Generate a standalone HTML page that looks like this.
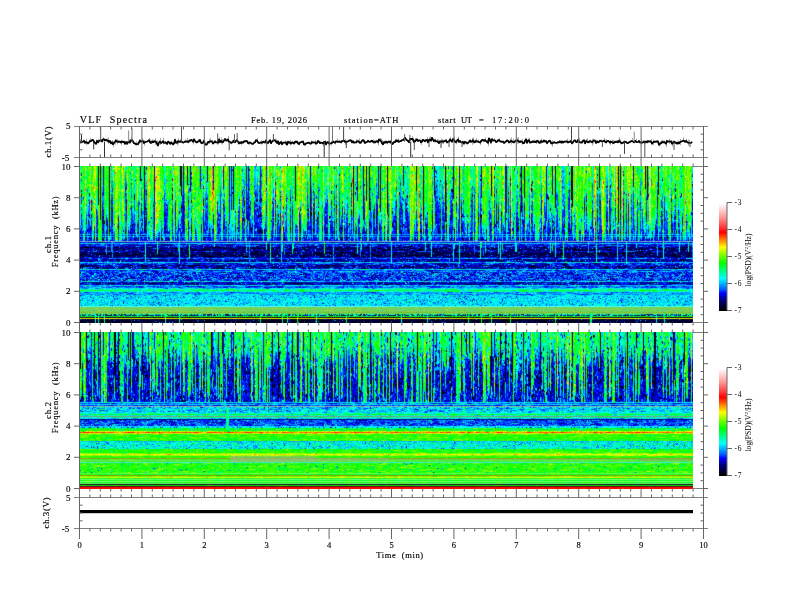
<!DOCTYPE html>
<html><head><meta charset="utf-8">
<style>
html,body{margin:0;padding:0;background:#fff;width:792px;height:612px;overflow:hidden}
#c{position:absolute;left:0;top:0}
svg{position:absolute;left:0;top:0}
text{font-family:"Liberation Serif",serif;fill:#000;stroke:#000;stroke-width:0.15px}
.sp{position:absolute;left:80px;width:613px}
#sp1{top:166px;height:157px;background:linear-gradient(to bottom,#3edc3b 0px,#3edc3b 1px,#3cde3d 1px,#3cde3d 2px,#40dd3d 2px,#40dd3d 3px,#40df3a 3px,#40df3a 4px,#40de3a 4px,#40de3a 5px,#3fde3c 5px,#3fde3c 6px,#3fdf3d 6px,#3fdf3d 7px,#3dde3e 7px,#3dde3e 8px,#3dde3d 8px,#3dde3d 9px,#3cde3d 9px,#3cde3d 10px,#3bde40 10px,#3bde40 11px,#39de43 11px,#39de43 12px,#37dd47 12px,#37dd47 13px,#39db46 13px,#39db46 14px,#3ad845 14px,#3ad845 15px,#38d949 15px,#38d949 16px,#35d94d 16px,#35d94d 17px,#33d74b 17px,#33d74b 18px,#33d64c 18px,#33d64c 19px,#33d74b 19px,#33d74b 20px,#32d74c 20px,#32d74c 21px,#32d54f 21px,#32d54f 22px,#30d453 22px,#30d453 23px,#30d450 23px,#30d450 24px,#30d452 24px,#30d452 25px,#2dd455 25px,#2dd455 26px,#2ed258 26px,#2ed258 27px,#2cce5b 27px,#2cce5b 28px,#2acb5e 28px,#2acb5e 29px,#2bca5f 29px,#2bca5f 30px,#2bc961 30px,#2bc961 31px,#2ac961 31px,#2ac961 32px,#29c964 32px,#29c964 33px,#29c963 33px,#29c963 34px,#2ac762 34px,#2ac762 35px,#2ac665 35px,#2ac665 36px,#28c468 36px,#28c468 37px,#26c16c 37px,#26c16c 38px,#26c16c 38px,#26c16c 39px,#26be6c 39px,#26be6c 40px,#25bd70 40px,#25bd70 41px,#25bc6f 41px,#25bc6f 42px,#23ba70 42px,#23ba70 43px,#22b872 43px,#22b872 44px,#22b775 44px,#22b775 45px,#21b577 45px,#21b577 46px,#1fb379 46px,#1fb379 47px,#1eb17d 47px,#1eb17d 48px,#1dae80 48px,#1dae80 49px,#1caa82 49px,#1caa82 50px,#1ba985 50px,#1ba985 51px,#17a98b 51px,#17a98b 52px,#17a78f 52px,#17a78f 53px,#16a493 53px,#16a493 54px,#14a596 54px,#14a596 55px,#14a197 55px,#14a197 56px,#149e9a 56px,#149e9a 57px,#129c9c 57px,#129c9c 58px,#1298a2 58px,#1298a2 59px,#1194a3 59px,#1194a3 60px,#1092a8 60px,#1092a8 61px,#0f8ea7 61px,#0f8ea7 62px,#0e8ba7 62px,#0e8ba7 63px,#0e84aa 63px,#0e84aa 64px,#0d7ead 64px,#0d7ead 65px,#0c78b0 65px,#0c78b0 66px,#0b75b1 66px,#0b75b1 67px,#0a7ab7 67px,#0a7ab7 68px,#02acd9 68px,#02acd9 69px,#077ebe 69px,#077ebe 70px,#02a9dd 70px,#02a9dd 71px,#0670bf 71px,#0670bf 72px,#0662ba 72px,#0662ba 73px,#055abe 73px,#055abe 74px,#1153dd 74px,#1153dd 75px,#6597ca 75px,#6597ca 76px,#103fdf 76px,#103fdf 77px,#00a7ea 77px,#00a7ea 78px,#0043d0 78px,#0043d0 79px,#0037d1 79px,#0037d1 80px,#0031c5 80px,#0031c5 81px,#001e8b 81px,#001e8b 82px,#001c83 82px,#001c83 83px,#001a7e 83px,#001a7e 84px,#001b87 84px,#001b87 85px,#0020aa 85px,#0020aa 86px,#001472 86px,#001472 87px,#001065 87px,#001065 88px,#000f63 88px,#000f63 89px,#000f62 89px,#000f62 90px,#000e6d 90px,#000e6d 91px,#001cb6 91px,#001cb6 92px,#004fe1 92px,#004fe1 93px,#001bad 93px,#001bad 94px,#0014a4 94px,#0014a4 95px,#0028ab 95px,#0028ab 96px,#00a0e0 96px,#00a0e0 97px,#0046dd 97px,#0046dd 98px,#0029d0 98px,#0029d0 99px,#001aaa 99px,#001aaa 100px,#0013a4 100px,#0013a4 101px,#0018a6 101px,#0018a6 102px,#002eac 102px,#002eac 103px,#00a6dd 103px,#00a6dd 104px,#0051eb 104px,#0051eb 105px,#006ff5 105px,#006ff5 106px,#0051e6 106px,#0051e6 107px,#0047e3 107px,#0047e3 108px,#0049e0 108px,#0049e0 109px,#0048df 109px,#0048df 110px,#0048e1 110px,#0048e1 111px,#0047e1 111px,#0047e1 112px,#0045e2 112px,#0045e2 113px,#0049e2 113px,#0049e2 114px,#0057e1 114px,#0057e1 115px,#00a3e2 115px,#00a3e2 116px,#0027ba 116px,#0027ba 117px,#0013b3 117px,#0013b3 118px,#0027b8 118px,#0027b8 119px,#00a8e7 119px,#00a8e7 120px,#0073f8 120px,#0073f8 121px,#007af9 121px,#007af9 122px,#00cbe6 122px,#00cbe6 123px,#01f6a8 123px,#01f6a8 124px,#03fe6c 124px,#03fe6c 125px,#00edb1 125px,#00edb1 126px,#00a2f4 126px,#00a2f4 127px,#00a0fd 127px,#00a0fd 128px,#00a2fb 128px,#00a2fb 129px,#00ccef 129px,#00ccef 130px,#00cfed 130px,#00cfed 131px,#00cfee 131px,#00cfee 132px,#00d3ec 132px,#00d3ec 133px,#00d3ee 133px,#00d3ee 134px,#00d0ed 134px,#00d0ed 135px,#00d1ed 135px,#00d1ed 136px,#00d0ed 136px,#00d0ed 137px,#00d3ed 137px,#00d3ed 138px,#00d3ee 138px,#00d3ee 139px,#0ad6ed 139px,#0ad6ed 140px,#4bf3d8 140px,#4bf3d8 141px,#70d76a 141px,#70d76a 142px,#76d258 142px,#76d258 143px,#74d258 143px,#74d258 144px,#74d259 144px,#74d259 145px,#76cf54 145px,#76cf54 146px,#7ec23d 146px,#7ec23d 147px,#5fd45d 147px,#5fd45d 148px,#0db089 148px,#0db089 149px,#027275 149px,#027275 150px,#06cd34 150px,#06cd34 151px,#1f431b 151px,#1f431b 152px,#bdbd0a 152px,#bdbd0a 153px,#1e292f 153px,#1e292f 154px,#000d35 154px,#000d35 155px,#000d35 155px,#000d35 156px,#05123b 156px,#05123b 157px)}
#sp2{top:332px;height:157px;background:linear-gradient(to bottom,#17d46b 0px,#17d46b 1px,#15d66d 1px,#15d66d 2px,#13d46c 2px,#13d46c 3px,#15d36c 3px,#15d36c 4px,#15d26a 4px,#15d26a 5px,#14d16e 5px,#14d16e 6px,#13d371 6px,#13d371 7px,#12d371 7px,#12d371 8px,#13d470 8px,#13d470 9px,#12d374 9px,#12d374 10px,#11d176 10px,#11d176 11px,#12d079 11px,#12d079 12px,#13cf79 12px,#13cf79 13px,#11cd78 13px,#11cd78 14px,#12ca7a 14px,#12ca7a 15px,#12ca7b 15px,#12ca7b 16px,#12c67f 16px,#12c67f 17px,#11c47e 17px,#11c47e 18px,#11bf7c 18px,#11bf7c 19px,#12bc7f 19px,#12bc7f 20px,#12b980 20px,#12b980 21px,#11b684 21px,#11b684 22px,#11b089 22px,#11b089 23px,#10ad8d 23px,#10ad8d 24px,#10a790 24px,#10a790 25px,#0fa08e 25px,#0fa08e 26px,#0f9a8e 26px,#0f9a8e 27px,#109290 27px,#109290 28px,#0f8d95 28px,#0f8d95 29px,#0f8894 29px,#0f8894 30px,#0f8692 30px,#0f8692 31px,#0e8492 31px,#0e8492 32px,#0e8093 32px,#0e8093 33px,#0e7f96 33px,#0e7f96 34px,#0e7a95 34px,#0e7a95 35px,#0d7796 35px,#0d7796 36px,#0d7596 36px,#0d7596 37px,#0d7598 37px,#0d7598 38px,#0c7298 38px,#0c7298 39px,#0c7094 39px,#0c7094 40px,#0c6e95 40px,#0c6e95 41px,#0d6c92 41px,#0d6c92 42px,#0e6c93 42px,#0e6c93 43px,#0d6e93 43px,#0d6e93 44px,#0c6e94 44px,#0c6e94 45px,#0c6a91 45px,#0c6a91 46px,#0d698d 46px,#0d698d 47px,#0b698e 47px,#0b698e 48px,#0a6892 48px,#0a6892 49px,#0a6793 49px,#0a6793 50px,#0a6995 50px,#0a6995 51px,#0a6895 51px,#0a6895 52px,#0b6797 52px,#0b6797 53px,#0b6994 53px,#0b6994 54px,#096997 54px,#096997 55px,#096897 55px,#096897 56px,#096a9c 56px,#096a9c 57px,#0867a1 57px,#0867a1 58px,#075fa4 58px,#075fa4 59px,#075ea5 59px,#075ea5 60px,#065ca7 60px,#065ca7 61px,#055aab 61px,#055aab 62px,#0558ae 62px,#0558ae 63px,#0555af 63px,#0555af 64px,#0452ae 64px,#0452ae 65px,#0450af 65px,#0450af 66px,#044eb4 66px,#044eb4 67px,#034bba 67px,#034bba 68px,#034aba 68px,#034aba 69px,#035bc0 69px,#035bc0 70px,#00c2e0 70px,#00c2e0 71px,#007cf3 71px,#007cf3 72px,#00b3f0 72px,#00b3f0 73px,#115ce7 73px,#115ce7 74px,#6aaeb9 74px,#6aaeb9 75px,#11c4e0 75px,#11c4e0 76px,#00c1eb 76px,#00c1eb 77px,#00c3e7 77px,#00c3e7 78px,#00c4e9 78px,#00c4e9 79px,#00c5e8 79px,#00c5e8 80px,#00dce3 80px,#00dce3 81px,#01f3b9 81px,#01f3b9 82px,#05fc57 82px,#05fc57 83px,#10e7b6 83px,#10e7b6 84px,#61ae97 84px,#61ae97 85px,#0fec9a 85px,#0fec9a 86px,#00c1d8 86px,#00c1d8 87px,#0024a0 87px,#0024a0 88px,#0045e0 88px,#0045e0 89px,#0051ee 89px,#0051ee 90px,#0051ed 90px,#0051ed 91px,#004dee 91px,#004dee 92px,#0053ee 92px,#0053ee 93px,#0061ef 93px,#0061ef 94px,#00caf6 94px,#00caf6 95px,#02d0d5 95px,#02d0d5 96px,#0cf84b 96px,#0cf84b 97px,#0eff33 97px,#0eff33 98px,#21fe2b 98px,#21fe2b 99px,#a5e706 99px,#a5e706 100px,#f08200 100px,#f08200 101px,#c4e001 101px,#c4e001 102px,#44fd09 102px,#44fd09 103px,#2cff0b 103px,#2cff0b 104px,#2aff0b 104px,#2aff0b 105px,#2bff0c 105px,#2bff0c 106px,#29ff0c 106px,#29ff0c 107px,#2bff0d 107px,#2bff0d 108px,#28f729 108px,#28f729 109px,#06cadb 109px,#06cadb 110px,#00e0d1 110px,#00e0d1 111px,#00e2cb 111px,#00e2cb 112px,#00e4cb 112px,#00e4cb 113px,#00e2ce 113px,#00e2ce 114px,#00e2ce 114px,#00e2ce 115px,#00e2cd 115px,#00e2cd 116px,#04e5b6 116px,#04e5b6 117px,#1bfc29 117px,#1bfc29 118px,#22ff12 118px,#22ff12 119px,#1fff12 119px,#1fff12 120px,#2dff0f 120px,#2dff0f 121px,#82fd02 121px,#82fd02 122px,#d3f100 122px,#d3f100 123px,#9afb02 123px,#9afb02 124px,#3df90c 124px,#3df90c 125px,#3bee12 125px,#3bee12 126px,#84b429 126px,#84b429 127px,#6fd347 127px,#6fd347 128px,#5fe442 128px,#5fe442 129px,#55eb4d 129px,#55eb4d 130px,#3deba7 130px,#3deba7 131px,#2dfa2a 131px,#2dfa2a 132px,#2afc12 132px,#2afc12 133px,#2afd10 133px,#2afd10 134px,#2efc11 134px,#2efc11 135px,#2afc11 135px,#2afc11 136px,#27fc13 136px,#27fc13 137px,#29fc13 137px,#29fc13 138px,#2bfc11 138px,#2bfc11 139px,#2dfd10 139px,#2dfd10 140px,#30fd1a 140px,#30fd1a 141px,#54ff42 141px,#54ff42 142px,#26f317 142px,#26f317 143px,#78b40b 143px,#78b40b 144px,#77f201 144px,#77f201 145px,#bdf902 145px,#bdf902 146px,#33fe1b 146px,#33fe1b 147px,#60ff60 147px,#60ff60 148px,#26ff29 148px,#26ff29 149px,#5fff60 149px,#5fff60 150px,#27ff27 150px,#27ff27 151px,#5ee060 151px,#5ee060 152px,#103d18 152px,#103d18 153px,#14c20e 153px,#14c20e 154px,#5d200c 154px,#5d200c 155px,#ea0b05 155px,#ea0b05 156px,#f8100a 156px,#f8100a 157px)}
</style></head><body>
<div class="sp" id="sp1"></div><div class="sp" id="sp2"></div>
<canvas id="c" width="792" height="612"></canvas>
<svg id="s" width="792" height="612">
<path d="M74 126.5L708 126.5M74 157.5L708 157.5M74 497.5L708 497.5M74 528.5L708 528.5M74 166.5L80 166.5M692.5 166.5L708 166.5M74 322.5L80 322.5M692.5 322.5L708 322.5M74 332.5L80 332.5M692.5 332.5L708 332.5M74 488.5L80 488.5M692.5 488.5L708 488.5" stroke="#808080" stroke-width="1" fill="none"/>
<path d="M79.5 126L79.5 539M703.5 126L703.5 539M89.9 126.5L89.9 129.5M89.9 157.5L89.9 154.5M89.9 166.5L89.9 163.5M89.9 322.5L89.9 325.5M89.9 332.5L89.9 329.5M89.9 488.5L89.9 491.5M89.9 497.5L89.9 494.5M89.9 528.5L89.9 531.5M100.3 126.5L100.3 129.5M100.3 157.5L100.3 154.5M100.3 166.5L100.3 163.5M100.3 322.5L100.3 325.5M100.3 332.5L100.3 329.5M100.3 488.5L100.3 491.5M100.3 497.5L100.3 494.5M100.3 528.5L100.3 531.5M110.7 126.5L110.7 129.5M110.7 157.5L110.7 154.5M110.7 166.5L110.7 163.5M110.7 322.5L110.7 325.5M110.7 332.5L110.7 329.5M110.7 488.5L110.7 491.5M110.7 497.5L110.7 494.5M110.7 528.5L110.7 531.5M121.1 126.5L121.1 129.5M121.1 157.5L121.1 154.5M121.1 166.5L121.1 163.5M121.1 322.5L121.1 325.5M121.1 332.5L121.1 329.5M121.1 488.5L121.1 491.5M121.1 497.5L121.1 494.5M121.1 528.5L121.1 531.5M131.5 126.5L131.5 129.5M131.5 157.5L131.5 154.5M131.5 166.5L131.5 163.5M131.5 322.5L131.5 325.5M131.5 332.5L131.5 329.5M131.5 488.5L131.5 491.5M131.5 497.5L131.5 494.5M131.5 528.5L131.5 531.5M141.9 126.5L141.9 166.5M141.9 322.5L141.9 332.5M141.9 488.5L141.9 497.5M141.9 528.5L141.9 539M152.3 126.5L152.3 129.5M152.3 157.5L152.3 154.5M152.3 166.5L152.3 163.5M152.3 322.5L152.3 325.5M152.3 332.5L152.3 329.5M152.3 488.5L152.3 491.5M152.3 497.5L152.3 494.5M152.3 528.5L152.3 531.5M162.7 126.5L162.7 129.5M162.7 157.5L162.7 154.5M162.7 166.5L162.7 163.5M162.7 322.5L162.7 325.5M162.7 332.5L162.7 329.5M162.7 488.5L162.7 491.5M162.7 497.5L162.7 494.5M162.7 528.5L162.7 531.5M173.1 126.5L173.1 129.5M173.1 157.5L173.1 154.5M173.1 166.5L173.1 163.5M173.1 322.5L173.1 325.5M173.1 332.5L173.1 329.5M173.1 488.5L173.1 491.5M173.1 497.5L173.1 494.5M173.1 528.5L173.1 531.5M183.5 126.5L183.5 129.5M183.5 157.5L183.5 154.5M183.5 166.5L183.5 163.5M183.5 322.5L183.5 325.5M183.5 332.5L183.5 329.5M183.5 488.5L183.5 491.5M183.5 497.5L183.5 494.5M183.5 528.5L183.5 531.5M193.9 126.5L193.9 129.5M193.9 157.5L193.9 154.5M193.9 166.5L193.9 163.5M193.9 322.5L193.9 325.5M193.9 332.5L193.9 329.5M193.9 488.5L193.9 491.5M193.9 497.5L193.9 494.5M193.9 528.5L193.9 531.5M204.3 126.5L204.3 166.5M204.3 322.5L204.3 332.5M204.3 488.5L204.3 497.5M204.3 528.5L204.3 539M214.7 126.5L214.7 129.5M214.7 157.5L214.7 154.5M214.7 166.5L214.7 163.5M214.7 322.5L214.7 325.5M214.7 332.5L214.7 329.5M214.7 488.5L214.7 491.5M214.7 497.5L214.7 494.5M214.7 528.5L214.7 531.5M225.1 126.5L225.1 129.5M225.1 157.5L225.1 154.5M225.1 166.5L225.1 163.5M225.1 322.5L225.1 325.5M225.1 332.5L225.1 329.5M225.1 488.5L225.1 491.5M225.1 497.5L225.1 494.5M225.1 528.5L225.1 531.5M235.5 126.5L235.5 129.5M235.5 157.5L235.5 154.5M235.5 166.5L235.5 163.5M235.5 322.5L235.5 325.5M235.5 332.5L235.5 329.5M235.5 488.5L235.5 491.5M235.5 497.5L235.5 494.5M235.5 528.5L235.5 531.5M245.9 126.5L245.9 129.5M245.9 157.5L245.9 154.5M245.9 166.5L245.9 163.5M245.9 322.5L245.9 325.5M245.9 332.5L245.9 329.5M245.9 488.5L245.9 491.5M245.9 497.5L245.9 494.5M245.9 528.5L245.9 531.5M256.3 126.5L256.3 129.5M256.3 157.5L256.3 154.5M256.3 166.5L256.3 163.5M256.3 322.5L256.3 325.5M256.3 332.5L256.3 329.5M256.3 488.5L256.3 491.5M256.3 497.5L256.3 494.5M256.3 528.5L256.3 531.5M266.7 126.5L266.7 166.5M266.7 322.5L266.7 332.5M266.7 488.5L266.7 497.5M266.7 528.5L266.7 539M277.1 126.5L277.1 129.5M277.1 157.5L277.1 154.5M277.1 166.5L277.1 163.5M277.1 322.5L277.1 325.5M277.1 332.5L277.1 329.5M277.1 488.5L277.1 491.5M277.1 497.5L277.1 494.5M277.1 528.5L277.1 531.5M287.5 126.5L287.5 129.5M287.5 157.5L287.5 154.5M287.5 166.5L287.5 163.5M287.5 322.5L287.5 325.5M287.5 332.5L287.5 329.5M287.5 488.5L287.5 491.5M287.5 497.5L287.5 494.5M287.5 528.5L287.5 531.5M297.9 126.5L297.9 129.5M297.9 157.5L297.9 154.5M297.9 166.5L297.9 163.5M297.9 322.5L297.9 325.5M297.9 332.5L297.9 329.5M297.9 488.5L297.9 491.5M297.9 497.5L297.9 494.5M297.9 528.5L297.9 531.5M308.3 126.5L308.3 129.5M308.3 157.5L308.3 154.5M308.3 166.5L308.3 163.5M308.3 322.5L308.3 325.5M308.3 332.5L308.3 329.5M308.3 488.5L308.3 491.5M308.3 497.5L308.3 494.5M308.3 528.5L308.3 531.5M318.7 126.5L318.7 129.5M318.7 157.5L318.7 154.5M318.7 166.5L318.7 163.5M318.7 322.5L318.7 325.5M318.7 332.5L318.7 329.5M318.7 488.5L318.7 491.5M318.7 497.5L318.7 494.5M318.7 528.5L318.7 531.5M329.1 126.5L329.1 166.5M329.1 322.5L329.1 332.5M329.1 488.5L329.1 497.5M329.1 528.5L329.1 539M339.5 126.5L339.5 129.5M339.5 157.5L339.5 154.5M339.5 166.5L339.5 163.5M339.5 322.5L339.5 325.5M339.5 332.5L339.5 329.5M339.5 488.5L339.5 491.5M339.5 497.5L339.5 494.5M339.5 528.5L339.5 531.5M349.9 126.5L349.9 129.5M349.9 157.5L349.9 154.5M349.9 166.5L349.9 163.5M349.9 322.5L349.9 325.5M349.9 332.5L349.9 329.5M349.9 488.5L349.9 491.5M349.9 497.5L349.9 494.5M349.9 528.5L349.9 531.5M360.3 126.5L360.3 129.5M360.3 157.5L360.3 154.5M360.3 166.5L360.3 163.5M360.3 322.5L360.3 325.5M360.3 332.5L360.3 329.5M360.3 488.5L360.3 491.5M360.3 497.5L360.3 494.5M360.3 528.5L360.3 531.5M370.7 126.5L370.7 129.5M370.7 157.5L370.7 154.5M370.7 166.5L370.7 163.5M370.7 322.5L370.7 325.5M370.7 332.5L370.7 329.5M370.7 488.5L370.7 491.5M370.7 497.5L370.7 494.5M370.7 528.5L370.7 531.5M381.1 126.5L381.1 129.5M381.1 157.5L381.1 154.5M381.1 166.5L381.1 163.5M381.1 322.5L381.1 325.5M381.1 332.5L381.1 329.5M381.1 488.5L381.1 491.5M381.1 497.5L381.1 494.5M381.1 528.5L381.1 531.5M391.5 126.5L391.5 166.5M391.5 322.5L391.5 332.5M391.5 488.5L391.5 497.5M391.5 528.5L391.5 539M401.9 126.5L401.9 129.5M401.9 157.5L401.9 154.5M401.9 166.5L401.9 163.5M401.9 322.5L401.9 325.5M401.9 332.5L401.9 329.5M401.9 488.5L401.9 491.5M401.9 497.5L401.9 494.5M401.9 528.5L401.9 531.5M412.3 126.5L412.3 129.5M412.3 157.5L412.3 154.5M412.3 166.5L412.3 163.5M412.3 322.5L412.3 325.5M412.3 332.5L412.3 329.5M412.3 488.5L412.3 491.5M412.3 497.5L412.3 494.5M412.3 528.5L412.3 531.5M422.7 126.5L422.7 129.5M422.7 157.5L422.7 154.5M422.7 166.5L422.7 163.5M422.7 322.5L422.7 325.5M422.7 332.5L422.7 329.5M422.7 488.5L422.7 491.5M422.7 497.5L422.7 494.5M422.7 528.5L422.7 531.5M433.1 126.5L433.1 129.5M433.1 157.5L433.1 154.5M433.1 166.5L433.1 163.5M433.1 322.5L433.1 325.5M433.1 332.5L433.1 329.5M433.1 488.5L433.1 491.5M433.1 497.5L433.1 494.5M433.1 528.5L433.1 531.5M443.5 126.5L443.5 129.5M443.5 157.5L443.5 154.5M443.5 166.5L443.5 163.5M443.5 322.5L443.5 325.5M443.5 332.5L443.5 329.5M443.5 488.5L443.5 491.5M443.5 497.5L443.5 494.5M443.5 528.5L443.5 531.5M453.9 126.5L453.9 166.5M453.9 322.5L453.9 332.5M453.9 488.5L453.9 497.5M453.9 528.5L453.9 539M464.3 126.5L464.3 129.5M464.3 157.5L464.3 154.5M464.3 166.5L464.3 163.5M464.3 322.5L464.3 325.5M464.3 332.5L464.3 329.5M464.3 488.5L464.3 491.5M464.3 497.5L464.3 494.5M464.3 528.5L464.3 531.5M474.7 126.5L474.7 129.5M474.7 157.5L474.7 154.5M474.7 166.5L474.7 163.5M474.7 322.5L474.7 325.5M474.7 332.5L474.7 329.5M474.7 488.5L474.7 491.5M474.7 497.5L474.7 494.5M474.7 528.5L474.7 531.5M485.1 126.5L485.1 129.5M485.1 157.5L485.1 154.5M485.1 166.5L485.1 163.5M485.1 322.5L485.1 325.5M485.1 332.5L485.1 329.5M485.1 488.5L485.1 491.5M485.1 497.5L485.1 494.5M485.1 528.5L485.1 531.5M495.5 126.5L495.5 129.5M495.5 157.5L495.5 154.5M495.5 166.5L495.5 163.5M495.5 322.5L495.5 325.5M495.5 332.5L495.5 329.5M495.5 488.5L495.5 491.5M495.5 497.5L495.5 494.5M495.5 528.5L495.5 531.5M505.9 126.5L505.9 129.5M505.9 157.5L505.9 154.5M505.9 166.5L505.9 163.5M505.9 322.5L505.9 325.5M505.9 332.5L505.9 329.5M505.9 488.5L505.9 491.5M505.9 497.5L505.9 494.5M505.9 528.5L505.9 531.5M516.3 126.5L516.3 166.5M516.3 322.5L516.3 332.5M516.3 488.5L516.3 497.5M516.3 528.5L516.3 539M526.7 126.5L526.7 129.5M526.7 157.5L526.7 154.5M526.7 166.5L526.7 163.5M526.7 322.5L526.7 325.5M526.7 332.5L526.7 329.5M526.7 488.5L526.7 491.5M526.7 497.5L526.7 494.5M526.7 528.5L526.7 531.5M537.1 126.5L537.1 129.5M537.1 157.5L537.1 154.5M537.1 166.5L537.1 163.5M537.1 322.5L537.1 325.5M537.1 332.5L537.1 329.5M537.1 488.5L537.1 491.5M537.1 497.5L537.1 494.5M537.1 528.5L537.1 531.5M547.5 126.5L547.5 129.5M547.5 157.5L547.5 154.5M547.5 166.5L547.5 163.5M547.5 322.5L547.5 325.5M547.5 332.5L547.5 329.5M547.5 488.5L547.5 491.5M547.5 497.5L547.5 494.5M547.5 528.5L547.5 531.5M557.9 126.5L557.9 129.5M557.9 157.5L557.9 154.5M557.9 166.5L557.9 163.5M557.9 322.5L557.9 325.5M557.9 332.5L557.9 329.5M557.9 488.5L557.9 491.5M557.9 497.5L557.9 494.5M557.9 528.5L557.9 531.5M568.3 126.5L568.3 129.5M568.3 157.5L568.3 154.5M568.3 166.5L568.3 163.5M568.3 322.5L568.3 325.5M568.3 332.5L568.3 329.5M568.3 488.5L568.3 491.5M568.3 497.5L568.3 494.5M568.3 528.5L568.3 531.5M578.7 126.5L578.7 166.5M578.7 322.5L578.7 332.5M578.7 488.5L578.7 497.5M578.7 528.5L578.7 539M589.1 126.5L589.1 129.5M589.1 157.5L589.1 154.5M589.1 166.5L589.1 163.5M589.1 322.5L589.1 325.5M589.1 332.5L589.1 329.5M589.1 488.5L589.1 491.5M589.1 497.5L589.1 494.5M589.1 528.5L589.1 531.5M599.5 126.5L599.5 129.5M599.5 157.5L599.5 154.5M599.5 166.5L599.5 163.5M599.5 322.5L599.5 325.5M599.5 332.5L599.5 329.5M599.5 488.5L599.5 491.5M599.5 497.5L599.5 494.5M599.5 528.5L599.5 531.5M609.9 126.5L609.9 129.5M609.9 157.5L609.9 154.5M609.9 166.5L609.9 163.5M609.9 322.5L609.9 325.5M609.9 332.5L609.9 329.5M609.9 488.5L609.9 491.5M609.9 497.5L609.9 494.5M609.9 528.5L609.9 531.5M620.3 126.5L620.3 129.5M620.3 157.5L620.3 154.5M620.3 166.5L620.3 163.5M620.3 322.5L620.3 325.5M620.3 332.5L620.3 329.5M620.3 488.5L620.3 491.5M620.3 497.5L620.3 494.5M620.3 528.5L620.3 531.5M630.7 126.5L630.7 129.5M630.7 157.5L630.7 154.5M630.7 166.5L630.7 163.5M630.7 322.5L630.7 325.5M630.7 332.5L630.7 329.5M630.7 488.5L630.7 491.5M630.7 497.5L630.7 494.5M630.7 528.5L630.7 531.5M641.1 126.5L641.1 166.5M641.1 322.5L641.1 332.5M641.1 488.5L641.1 497.5M641.1 528.5L641.1 539M651.5 126.5L651.5 129.5M651.5 157.5L651.5 154.5M651.5 166.5L651.5 163.5M651.5 322.5L651.5 325.5M651.5 332.5L651.5 329.5M651.5 488.5L651.5 491.5M651.5 497.5L651.5 494.5M651.5 528.5L651.5 531.5M661.9 126.5L661.9 129.5M661.9 157.5L661.9 154.5M661.9 166.5L661.9 163.5M661.9 322.5L661.9 325.5M661.9 332.5L661.9 329.5M661.9 488.5L661.9 491.5M661.9 497.5L661.9 494.5M661.9 528.5L661.9 531.5M672.3 126.5L672.3 129.5M672.3 157.5L672.3 154.5M672.3 166.5L672.3 163.5M672.3 322.5L672.3 325.5M672.3 332.5L672.3 329.5M672.3 488.5L672.3 491.5M672.3 497.5L672.3 494.5M672.3 528.5L672.3 531.5M682.7 126.5L682.7 129.5M682.7 157.5L682.7 154.5M682.7 166.5L682.7 163.5M682.7 322.5L682.7 325.5M682.7 332.5L682.7 329.5M682.7 488.5L682.7 491.5M682.7 497.5L682.7 494.5M682.7 528.5L682.7 531.5M693.1 126.5L693.1 129.5M693.1 157.5L693.1 154.5M693.1 166.5L693.1 163.5M693.1 322.5L693.1 325.5M693.1 332.5L693.1 329.5M693.1 488.5L693.1 491.5M693.1 497.5L693.1 494.5M693.1 528.5L693.1 531.5M79.5 134.2L82.5 134.2M703.5 134.2L700.5 134.2M79.5 142L82.5 142M703.5 142L700.5 142M79.5 149.8L82.5 149.8M703.5 149.8L700.5 149.8M79.5 505.2L82.5 505.2M703.5 505.2L700.5 505.2M79.5 513L82.5 513M703.5 513L700.5 513M79.5 520.8L82.5 520.8M703.5 520.8L700.5 520.8M74 166.5L79.5 166.5M703.5 166.5L708 166.5M703.5 174.3L700.5 174.3M703.5 182.1L700.5 182.1M703.5 189.9L700.5 189.9M74 197.7L79.5 197.7M703.5 197.7L708 197.7M703.5 205.5L700.5 205.5M703.5 213.3L700.5 213.3M703.5 221.1L700.5 221.1M74 228.9L79.5 228.9M703.5 228.9L708 228.9M703.5 236.7L700.5 236.7M703.5 244.5L700.5 244.5M703.5 252.3L700.5 252.3M74 260.1L79.5 260.1M703.5 260.1L708 260.1M703.5 267.9L700.5 267.9M703.5 275.7L700.5 275.7M703.5 283.5L700.5 283.5M74 291.3L79.5 291.3M703.5 291.3L708 291.3M703.5 299.1L700.5 299.1M703.5 306.9L700.5 306.9M703.5 314.7L700.5 314.7M74 322.5L79.5 322.5M703.5 322.5L708 322.5M74 332.5L79.5 332.5M703.5 332.5L708 332.5M703.5 340.3L700.5 340.3M703.5 348.1L700.5 348.1M703.5 355.9L700.5 355.9M74 363.7L79.5 363.7M703.5 363.7L708 363.7M703.5 371.5L700.5 371.5M703.5 379.3L700.5 379.3M703.5 387.1L700.5 387.1M74 394.9L79.5 394.9M703.5 394.9L708 394.9M703.5 402.7L700.5 402.7M703.5 410.5L700.5 410.5M703.5 418.3L700.5 418.3M74 426.1L79.5 426.1M703.5 426.1L708 426.1M703.5 433.9L700.5 433.9M703.5 441.7L700.5 441.7M703.5 449.5L700.5 449.5M74 457.3L79.5 457.3M703.5 457.3L708 457.3M703.5 465.1L700.5 465.1M703.5 472.9L700.5 472.9M703.5 480.7L700.5 480.7M74 488.5L79.5 488.5M703.5 488.5L708 488.5M727 202.5L732 202.5M727 229.5L732 229.5M727 256.5L732 256.5M727 283.5L732 283.5M727 310.5L732 310.5M727 202.5L727 310.5M727 367.5L732 367.5M727 394.5L732 394.5M727 421.5L732 421.5M727 448.5L732 448.5M727 475.5L732 475.5M727 367.5L727 475.5" stroke="#666" stroke-width="1" fill="none"/>
<text x="79.5" y="548.0" font-size="8.5" text-anchor="middle" >0</text>
<text x="141.9" y="548.0" font-size="8.5" text-anchor="middle" >1</text>
<text x="204.3" y="548.0" font-size="8.5" text-anchor="middle" >2</text>
<text x="266.7" y="548.0" font-size="8.5" text-anchor="middle" >3</text>
<text x="329.1" y="548.0" font-size="8.5" text-anchor="middle" >4</text>
<text x="391.5" y="548.0" font-size="8.5" text-anchor="middle" >5</text>
<text x="453.9" y="548.0" font-size="8.5" text-anchor="middle" >6</text>
<text x="516.3" y="548.0" font-size="8.5" text-anchor="middle" >7</text>
<text x="578.7" y="548.0" font-size="8.5" text-anchor="middle" >8</text>
<text x="641.1" y="548.0" font-size="8.5" text-anchor="middle" >9</text>
<text x="703.5" y="548.0" font-size="8.5" text-anchor="middle" >10</text>
<text x="400.0" y="558.0" font-size="8.5" text-anchor="middle" letter-spacing="0.6">Time&#160;&#160;(min)</text>
<text x="70.5" y="129.0" font-size="9" text-anchor="end" >5</text>
<text x="69.3" y="161.0" font-size="9" text-anchor="end" >-5</text>
<text x="70.5" y="500.5" font-size="9" text-anchor="end" >5</text>
<text x="69.3" y="531.5" font-size="9" text-anchor="end" >-5</text>
<text x="70.5" y="169.5" font-size="9" text-anchor="end" >10</text>
<text x="70.5" y="200.7" font-size="9" text-anchor="end" >8</text>
<text x="70.5" y="231.9" font-size="9" text-anchor="end" >6</text>
<text x="70.5" y="263.1" font-size="9" text-anchor="end" >4</text>
<text x="70.5" y="294.3" font-size="9" text-anchor="end" >2</text>
<text x="70.5" y="325.5" font-size="9" text-anchor="end" >0</text>
<text x="70.5" y="335.5" font-size="9" text-anchor="end" >10</text>
<text x="70.5" y="366.7" font-size="9" text-anchor="end" >8</text>
<text x="70.5" y="397.9" font-size="9" text-anchor="end" >6</text>
<text x="70.5" y="429.1" font-size="9" text-anchor="end" >4</text>
<text x="70.5" y="460.3" font-size="9" text-anchor="end" >2</text>
<text x="70.5" y="491.5" font-size="9" text-anchor="end" >0</text>
<text x="734.5" y="204.7" font-size="7.5" text-anchor="start" letter-spacing="0.8" style="stroke-width:0">-3</text>
<text x="734.5" y="231.7" font-size="7.5" text-anchor="start" letter-spacing="0.8" style="stroke-width:0">-4</text>
<text x="734.5" y="258.7" font-size="7.5" text-anchor="start" letter-spacing="0.8" style="stroke-width:0">-5</text>
<text x="734.5" y="285.7" font-size="7.5" text-anchor="start" letter-spacing="0.8" style="stroke-width:0">-6</text>
<text x="734.5" y="312.7" font-size="7.5" text-anchor="start" letter-spacing="0.8" style="stroke-width:0">-7</text>
<text x="734.5" y="369.7" font-size="7.5" text-anchor="start" letter-spacing="0.8" style="stroke-width:0">-3</text>
<text x="734.5" y="396.7" font-size="7.5" text-anchor="start" letter-spacing="0.8" style="stroke-width:0">-4</text>
<text x="734.5" y="423.7" font-size="7.5" text-anchor="start" letter-spacing="0.8" style="stroke-width:0">-5</text>
<text x="734.5" y="450.7" font-size="7.5" text-anchor="start" letter-spacing="0.8" style="stroke-width:0">-6</text>
<text x="734.5" y="477.7" font-size="7.5" text-anchor="start" letter-spacing="0.8" style="stroke-width:0">-7</text>
<text x="79.8" y="122.9" font-size="10" letter-spacing="1.2">VLF&#160;&#160;Spectra</text>
<text x="251.0" y="122.9" font-size="8.5" textLength="56" lengthAdjust="spacing">Feb.&#160;19,&#160;2026</text>
<text x="344.0" y="122.9" font-size="8.5" textLength="54.5" lengthAdjust="spacing">station=ATH</text>
<text x="438.0" y="122.9" font-size="8.5" textLength="17.5" lengthAdjust="spacing">start</text>
<text x="461.0" y="122.9" font-size="8.5" textLength="11" lengthAdjust="spacing">UT</text>
<text x="479.0" y="122.9" font-size="8.5" textLength="5" lengthAdjust="spacing">=</text>
<text x="492.0" y="122.9" font-size="8.5" textLength="37" lengthAdjust="spacing">17:20:0</text>
<text transform="translate(50.8,142) rotate(-90)" x="0" y="0" font-size="9" text-anchor="middle" textLength="31" lengthAdjust="spacing">ch.1(V)</text>
<text transform="translate(51,244.5) rotate(-90)" x="0" y="0" font-size="8.5" text-anchor="middle" textLength="17" lengthAdjust="spacing">ch.1</text>
<text transform="translate(58,231.8) rotate(-90)" x="0" y="0" font-size="8.5" text-anchor="middle" textLength="71" lengthAdjust="spacing">Frequency&#160;&#160;(kHz)</text>
<text transform="translate(51,410.5) rotate(-90)" x="0" y="0" font-size="8.5" text-anchor="middle" textLength="17" lengthAdjust="spacing">ch.2</text>
<text transform="translate(58,397.8) rotate(-90)" x="0" y="0" font-size="8.5" text-anchor="middle" textLength="71" lengthAdjust="spacing">Frequency&#160;&#160;(kHz)</text>
<text transform="translate(49.3,513) rotate(-90)" x="0" y="0" font-size="9" text-anchor="middle" textLength="31" lengthAdjust="spacing">ch.3(V)</text>
<text transform="translate(750.6,260) rotate(-90)" x="0" y="0" font-size="7.5" text-anchor="middle" textLength="53" lengthAdjust="spacingAndGlyphs" style="stroke-width:0">log(PSD)(V<tspan font-size="5" dy="-3">2</tspan><tspan dy="3">/Hz)</tspan></text>
<text transform="translate(750.6,425) rotate(-90)" x="0" y="0" font-size="7.5" text-anchor="middle" textLength="53" lengthAdjust="spacingAndGlyphs" style="stroke-width:0">log(PSD)(V<tspan font-size="5" dy="-3">2</tspan><tspan dy="3">/Hz)</tspan></text>
</svg>
<script>var cv=document.getElementById('c'),ctx=cv.getContext('2d');
var W=792,H=612;
var img=ctx.createImageData(W,H),D=img.data;
for(var i=0;i<D.length;i+=4){D[i]=255;D[i+1]=255;D[i+2]=255;D[i+3]=255;}
var seed=12345;
function rnd(){seed=(seed*1103515245+12345)%2147483648;return seed/2147483648;}
function gauss(){var u=rnd()||1e-9,v=rnd();return Math.sqrt(-2*Math.log(u))*Math.cos(6.2832*v);}
var ST=[[0,0,0,0],[0.10,0,0,128],[0.16,0,0,255],[0.20,0,96,255],[0.25,0,176,255],[0.30,0,255,255],[0.44,0,255,0],[0.52,128,255,0],[0.59,255,255,0],[0.66,255,128,0],[0.73,255,0,0],[0.80,255,80,80],[0.88,255,160,160],[1,255,255,255]];
function cmap(v){if(v<=0)return [0,0,0];if(v>=1)return [255,255,255];
 for(var k=1;k<ST.length;k++){if(v<=ST[k][0]){var a=ST[k-1],b=ST[k],t=(v-a[0])/(b[0]-a[0]);return [a[1]+(b[1]-a[1])*t,a[2]+(b[2]-a[2])*t,a[3]+(b[3]-a[3])*t];}}}
function put(x,y,c){var o=(y*W+x)*4;D[o]=c[0];D[o+1]=c[1];D[o+2]=c[2];}
function cbar(y0,y1){for(var y=y0;y<=y1;y++){var v=(y1-y)/(y1-y0);var c=cmap(v);for(var x=719;x<727;x++)put(x,y,c);}}
function clamp(a,lo,hi){return a<lo?lo:a>hi?hi:a;}
function pl(A,t){if(t<=A[0][0])return A[0][1];for(var k=1;k<A.length;k++){if(t<=A[k][0]){var q=(t-A[k-1][0])/(A[k][0]-A[k-1][0]);return A[k-1][1]+(A[k][1]-A[k-1][1])*q;}}return A[A.length-1][1];}
function spec(cfg){
 var X0=80,X1=692,nx=X1-X0+1;
 var d=new Float32Array(nx),hot=new Float32Array(nx),CN=new Float32Array(nx);
 var BL=new Float32Array(nx),BLV=new Float32Array(nx),TL=new Uint8Array(nx),TV=new Float32Array(nx),TY0=new Int16Array(nx),TY1=new Int16Array(nx);
 for(var x=0;x<nx;x++){
   CN[x]=gauss()*cfg.cn;
   if(x>0 && rnd()<cfg.keep){d[x]=Math.min(cfg.amax,d[x-1]*(0.8+0.25*rnd()));CN[x]=CN[x-1];}
   else if(cfg.bim && rnd()<cfg.bim[0]){d[x]=cfg.bim[1]+rnd()*(cfg.amax-cfg.bim[1]);}
   else {d[x]=(cfg.bim?cfg.bim[2]:cfg.amax)*Math.pow(rnd(),cfg.apow);}
   if(cfg.dmod) d[x]*=pl(cfg.dmod,x/nx);
   hot[x]=(d[x]>cfg.hotA && rnd()<0.4)?Math.min(0.25,(d[x]-cfg.hotA)*cfg.hotK):0;
   BL[x]=rnd()<cfg.pblack?(cfg.bc0+rnd()*(cfg.bc1-cfg.bc0)):-1;
   BLV[x]=rnd()<0.6?0.02:0.10+rnd()*0.06;
   TL[x]=rnd()<cfg.pthrough?1:0; TV[x]=cfg.tv[0]+rnd()*(cfg.tv[1]-cfg.tv[0]);
   TY0[x]=cfg.ty[0]+Math.floor(rnd()*cfg.ty[1]); TY1[x]=cfg.ty[2]+Math.floor(rnd()*cfg.ty[3]);
 }
 var NS=new Float32Array(nx),RUN=new Int8Array(nx),RV=new Float32Array(nx);
 var prof={};
 cfg.rows.forEach(function(r){for(var y=r[0];y<=r[1];y++)prof[y]=r[2];});
 for(var y=cfg.Y0;y<=cfg.Y1;y++){
   var p=prof[y],HN=0,hc=(p&&p.hc!==undefined)?p.hc:cfg.hc;
   for(var x=0;x<nx;x++){
     var v,c=null;
     if(y<=cfg.Yc){
       var t=(y-cfg.Y0)/(cfg.Yc-cfg.Y0);
       var bg=pl(cfg.bg,t);
       var g=cfg.g[0]*(1-t)+cfg.g[1]*t;
       var L=clamp(0.30+(g-0.30)*clamp(d[x]*cfg.lk,0,1)+CN[x],0,1);
       NS[x]=NS[x]*cfg.vc+gauss()*Math.sqrt(1-cfg.vc*cfg.vc);
       var e;
       if(cfg.lin){
         var sx=d[x]/cfg.amax, top=cfg.lin[0]+cfg.lin[1]*sx+CN[x], bot=cfg.lin[2]+cfg.lin[3]*Math.pow(sx,cfg.lin[4]);
         var tt=Math.pow(t,cfg.lin[5]);
         v=top+(bot-top)*tt+NS[x]*cfg.sd+gauss()*0.015; e=sx;
       } else {
       e=clamp((d[x]-t+NS[x]*cfg.jit)/cfg.soft+0.5,0,1);
       v=bg+(L-bg)*e+NS[x]*cfg.sd+gauss()*0.015;
       }
       if(RUN[x]>0){RUN[x]--;v+=RV[x];}
       else { var r=rnd();
         if(r<cfg.pdark){RUN[x]=Math.floor(rnd()*3);RV[x]=-(0.10+rnd()*0.12);v+=RV[x];}
         else if(r<cfg.pdark+cfg.pcy){RUN[x]=Math.floor(rnd()*3);RV[x]=0.06+rnd()*0.06;v+=RV[x];}
       }
       if(e>0.5 && rnd()<hot[x]*(1-t)) v+=0.08+rnd()*0.12;
       if(BL[x]>=0 && t<=BL[x]) v=BLV[x]+gauss()*0.02;
       if(p){ var ov=p.v+gauss()*0.02; v=v*(1-p.ov)+ov*p.ov; }
     } else if(p){
       HN=HN*hc+gauss()*Math.sqrt(1-hc*hc);
       v=p.v+HN*(p.sd||0.02);
       if(p.dp && rnd()<p.dp) v+=(p.dd||-0.12)*(0.6+0.8*rnd());
       if(TL[x] && p.tl && y>=TY0[x] && y<=TY1[x]) v=Math.max(v,TV[x]+gauss()*0.03);
       if(p.c){ var m=p.m||0.6; var cc=cmap(v); c=[cc[0]*(1-m)+p.c[0]*m,cc[1]*(1-m)+p.c[1]*m,cc[2]*(1-m)+p.c[2]*m]; }
     } else { v=0.2; }
     put(X0+x,y,c||cmap(v));
   }
 }
}
// ch.1
spec({Y0:166,Y1:322,Yc:240,keep:0.12,amax:1.2,apow:0.9,bim:[0.5,0.7,0.8],soft:0.3,jit:0.03,hotA:1.08,hotK:0.35,lk:2.5,cn:0.06,vc:0.8,hc:0.6,
 pblack:0.08,bc0:0.2,bc1:1.0,pthrough:0.1,tv:[0.2,0.4],ty:[240,4,246,18],
 bg:[[0,0.33],[0.25,0.24],[0.55,0.18],[1,0.15]],g:[0.48,0.43],sd:0.025,pdark:0.035,pcy:0.05,
 rows:[
 [234,234,{v:0.30,ov:0.6}],[236,236,{v:0.30,ov:0.6}],[240,240,{v:0.16,ov:0.5}],
 [241,241,{v:0.30,c:[190,160,175],m:0.7,tl:1}],[242,242,{v:0.15,tl:1}],[243,243,{v:0.28,sd:0.04,tl:1}],[244,246,{v:0.15,sd:0.05,tl:1}],
 [247,250,{v:0.08,sd:0.04,dp:0.1,dd:0.12,tl:1}],[251,251,{v:0.13,sd:0.05,tl:1}],[252,256,{v:0.06,sd:0.03,dp:0.1,dd:0.12,tl:1}],
 [257,257,{v:0.13,sd:0.04,tl:1}],[258,258,{v:0.20,sd:0.05,tl:1}],[259,261,{v:0.11,sd:0.04,dp:0.06,dd:0.12,tl:1}],[262,262,{v:0.28,sd:0.05,tl:1}],
 [263,264,{v:0.16,sd:0.05,tl:1}],[265,268,{v:0.11,sd:0.05,dp:0.1,dd:0.12,tl:1}],[269,269,{v:0.28,sd:0.05,tl:1}],[270,270,{v:0.17,sd:0.04,tl:1}],[271,271,{v:0.23,sd:0.05,tl:1}],
 [272,280,{v:0.17,sd:0.05,dp:0.1,dd:0.12,hc:0.4,tl:1}],[281,281,{v:0.27,sd:0.05,tl:1}],[282,284,{v:0.12,sd:0.04,dp:0.06,dd:0.12,tl:1}],[285,285,{v:0.27,sd:0.05,tl:1}],
 [286,287,{v:0.21,sd:0.04,tl:1}],[288,288,{v:0.28,sd:0.04}],[289,289,{v:0.34,sd:0.04}],[290,290,{v:0.40,sd:0.04}],[291,291,{v:0.33,sd:0.04}],[292,294,{v:0.24,sd:0.04}],
 [295,305,{v:0.29,sd:0.035,dp:0.1,dd:-0.1,hc:0.2}],[306,306,{v:0.32,c:[200,255,255],m:0.4}],
 [307,311,{v:0.44,sd:0.04,c:[165,185,120],m:0.65}],[312,312,{v:0.5,c:[150,150,80],m:0.65}],[313,313,{v:0.44,c:[170,195,140],m:0.6}],
 [314,314,{v:0.36,sd:0.03,dp:0.3,dd:-0.25}],[315,315,{v:0.08,sd:0.03,dp:0.3,dd:0.25}],[316,316,{v:0.42,sd:0.03}],[317,317,{v:0.02,sd:0}],[318,318,{v:0.59,sd:0.01}],
 [319,322,{v:0.03,sd:0.02,dp:0.05,dd:0.15}]
 ]});
// ch.2
spec({Y0:332,Y1:488,Yc:401,keep:0.06,amax:1.15,apow:1.0,bim:[0.36,0.8,0.5],soft:0.15,jit:0.04,hotA:1.08,hotK:1.0,lk:1.6,cn:0.05,vc:0.8,hc:0.6,
 pblack:0.12,bc0:0.2,bc1:1.0,pthrough:0.015,tv:[0.2,0.3],ty:[402,4,410,15],
 bg:[[0,0.37],[0.12,0.31],[0.4,0.17],[0.7,0.14],[1,0.15]],g:[0.44,0.40],sd:0.025,pdark:0.06,pcy:0.06,
 rows:[
 [402,402,{v:0.30,sd:0.04,tl:1}],[403,403,{v:0.2,sd:0.04,tl:1}],[404,404,{v:0.28,sd:0.04,tl:1}],[405,405,{v:0.18,sd:0.04,tl:1}],[406,406,{v:0.35,c:[200,160,170],m:0.7}],
 [407,411,{v:0.28,sd:0.05,dp:0.08,dd:-0.1,tl:1}],[412,412,{v:0.29,sd:0.04,tl:1}],[413,413,{v:0.32,sd:0.04}],[414,414,{v:0.42,sd:0.03}],[415,415,{v:0.31,sd:0.04}],
 [416,416,{v:0.30,c:[170,120,110],m:0.75}],[417,417,{v:0.36,sd:0.04}],[418,418,{v:0.28,sd:0.04}],[419,419,{v:0.10}],[420,425,{v:0.18,sd:0.04,dp:0.1,dd:0.12}],
 [426,426,{v:0.28}],[427,427,{v:0.30,dp:0.2,dd:-0.15}],[428,430,{v:0.42,sd:0.04}],[431,431,{v:0.55,sd:0.04}],[432,432,{v:0.68,sd:0.03}],[433,433,{v:0.58,sd:0.04}],
 [434,440,{v:0.46,sd:0.035}],[441,441,{v:0.26}],[442,448,{v:0.315,sd:0.05,dp:0.06,dd:-0.1,hc:0.2}],[449,452,{v:0.45,sd:0.035}],[453,453,{v:0.52}],
 [454,454,{v:0.59,sd:0.03}],[455,455,{v:0.54,sd:0.03}],[456,457,{v:0.46}],[458,458,{v:0.56,c:[110,100,30],m:0.6}],[459,461,{v:0.46,c:[190,210,160],m:0.3}],
 [462,462,{v:0.32,c:[150,200,200],m:0.4}],[463,472,{v:0.46,sd:0.035,dp:0.03,dd:-0.2}],[473,473,{v:0.46,c:[200,255,200],m:0.4}],[474,474,{v:0.44}],
 [475,475,{v:0.56,c:[100,90,20],m:0.6}],[476,476,{v:0.50}],[477,477,{v:0.58}],[478,478,{v:0.44}],[479,479,{v:0.44,c:[230,255,230],m:0.5}],
 [480,480,{v:0.44}],[481,481,{v:0.44,c:[230,255,230],m:0.5}],[482,482,{v:0.44}],[483,483,{v:0.44,c:[230,255,230],m:0.5}],
 [484,484,{v:0.0,sd:0}],[485,485,{v:0.44}],[486,486,{v:0.05,c:[100,0,0],m:0.8}],[487,488,{v:0.73,sd:0.01}]
 ]});
function patch(x0,x1,y0,y1,col,m,jit){for(var y=y0;y<=y1;y++)for(var x=x0;x<=x1;x++){var o=(y*W+x)*4;var mm=m*(jit?(0.7+0.6*rnd()):1);D[o]=D[o]*(1-mm)+col[0]*mm;D[o+1]=D[o+1]*(1-mm)+col[1]*mm;D[o+2]=D[o+2]*(1-mm)+col[2]*mm;}}
function vset(x0,x1,y0,y1,v,sd){for(var y=y0;y<=y1;y++)for(var x=x0;x<=x1;x++)put(x,y,cmap(v+gauss()*sd));}
for(var x=80;x<=692;x++){if(rnd()<0.035){var vv=0.32+rnd()*0.12;for(var y=313;y<=322;y++)if(y!=318)put(x,y,cmap(vv+gauss()*0.02));}}
vset(226,228,409,428,0.36,0.03);
patch(230,314,456,461,[165,175,140],0.6,1);
patch(314,389,458,460,[160,170,140],0.5,1);
patch(385,640,459,459,[160,160,130],0.35,1);
patch(640,692,458,460,[150,150,110],0.45,1);
function blur(x0,x1,y0,y1,c,b,a){
 var w=x1-x0+1,h=y1-y0+1,src=new Float32Array(w*h*3);
 for(var y=0;y<h;y++)for(var x=0;x<w;x++){var o=((y+y0)*W+x+x0)*4,q=(y*w+x)*3;src[q]=D[o];src[q+1]=D[o+1];src[q+2]=D[o+2];}
 for(var y=0;y<h;y++)for(var x=0;x<w;x++){
   var o=((y+y0)*W+x+x0)*4;
   for(var k=0;k<3;k++){
     var s=0,ws=0;
     for(var dy=-1;dy<=1;dy++)for(var dx=-1;dx<=1;dx++){
       var yy=y+dy,xx=x+dx; if(yy<0||yy>=h||xx<0||xx>=w)continue;
       var wt=(dx==0&&dy==0)?c:((dx==0||dy==0)?b:a);
       s+=src[(yy*w+xx)*3+k]*wt; ws+=wt;
     }
     D[o+k]=s/ws;
   }
 }
}
blur(80,692,166,322,0.6,0.08,0.02);blur(80,692,332,488,0.6,0.08,0.02);
cbar(203,310);cbar(368,475);
ctx.putImageData(img,0,0);
// ch.1 time series
(function(){
 seed=777;
 ctx.lineJoin='round';
 var pts=[],base=0,fast=0;
 for(var x=80;x<=692;x+=1){
   base=base*0.97+gauss()*0.14;
   fast=fast*0.15+gauss()*1.0;
   pts.push([x,141.8+base+fast]);
 }
 ctx.strokeStyle='rgba(150,150,150,0.8)';ctx.lineWidth=1;
 ctx.beginPath();
 for(var i=0;i<pts.length;i++){var r=rnd();if(r<0.35){var h=1+rnd()*2.5;ctx.moveTo(pts[i][0]+0.5,pts[i][1]-h);ctx.lineTo(pts[i][0]+0.5,pts[i][1]+h*(rnd()<0.5?1:0.3));}}
 ctx.stroke();
 ctx.strokeStyle='#000';ctx.lineWidth=1.8;
 ctx.beginPath();
 for(var i=0;i<pts.length;i++){if(i==0)ctx.moveTo(pts[i][0],pts[i][1]);else ctx.lineTo(pts[i][0],pts[i][1]);}
 ctx.stroke();
 // spikes
 var sp=[[81.5,135,'#333'],[93.7,149.4,'#333'],[100.7,126.5,'#555'],[104.5,157.5,'#333'],[128.7,130.3,'#888'],[132,128.4,'#666'],
  [181.5,126.5,'#555'],[217.7,133.5,'#555'],[229.2,150.3,'#444'],[234.5,134,'#666'],[237.2,133,'#555'],[273.4,134,'#555'],
  [324.2,157.5,'#333'],[332.5,126.5,'#777'],[343.6,126.5,'#444'],[346.3,148,'#444'],[404.6,134,'#666'],[409.9,135,'#555'],[410.7,157.5,'#333'],[414.3,150,'#555'],
  [429,147,'#555'],[441,148,'#444'],[449,147,'#555'],[462,147,'#444'],[571.5,126.5,'#444'],[602.4,147,'#555'],[624.5,153.8,'#444'],[634.2,131.7,'#888'],[644.8,157.5,'#555'],
  [674,150,'#555'],[690,147,'#555']];
 ctx.lineWidth=1;
 sp.forEach(function(q){ctx.strokeStyle=q[2];ctx.beginPath();ctx.moveTo(q[0],141.8);ctx.lineTo(q[0],q[1]);ctx.stroke();});
 // ch.3 line
 ctx.fillStyle='#000';ctx.fillRect(80,510,613,3.2);
})();
</script>
</body></html>
